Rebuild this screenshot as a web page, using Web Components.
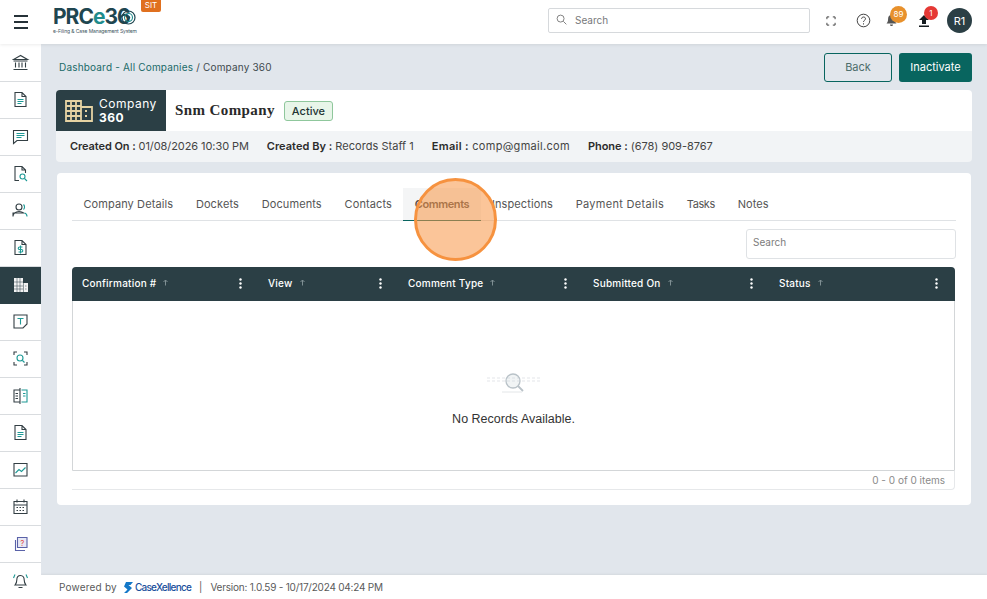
<!DOCTYPE html>
<html>
<head>
<meta charset="utf-8">
<title>Company 360</title>
<style>
  html, body { margin: 0; height: 100%; }
  body { font-family: "Inter", "Liberation Sans", sans-serif; color: #333; overflow: hidden; background: #e1e6ec; }
  .app { display: flex; flex-direction: column; height: 599px; }
  .row { display: flex; flex: 1; min-height: 0; }
  .col { display: flex; flex-direction: column; flex: 1; min-width: 0; }
</style>
</head>
<body>
<div class="app">
  <app-header></app-header>
  <div class="row">
    <side-nav></side-nav>
    <div class="col">
      <page-content>
        <page-head></page-head>
        <company-card></company-card>
        <detail-card>
          <tab-strip></tab-strip>
          <data-grid></data-grid>
        </detail-card>
      </page-content>
      <app-footer></app-footer>
    </div>
  </div>
</div>
<click-marker></click-marker>

<script>
const DARK = '#2b3f45';
const TEAL = '#08655f';

class AppHeader extends HTMLElement {
  constructor() {
    super();
    this.attachShadow({ mode: 'open' }).innerHTML = `
    <style>
      :host { display: flex; align-items: center; height: 44px; box-sizing: border-box; padding-bottom: 3px; background: #fff; position: relative; z-index: 2; box-shadow: 0 1px 3px rgba(0,0,0,.08); font-size: 10px; }
      .burger { width: 14px; height: 10px; margin: 3px 0 0 14px; border-top: 2px solid #263238; border-bottom: 2px solid #263238; position: relative; }
      .burger::after { content: ''; position: absolute; left: 0; right: 0; top: 4px; height: 2px; background: #263238; }
      .logo { margin-left: 25px; position: relative; width: 100px; height: 44px; align-self: flex-start; }
      .name { position: absolute; left: 0; top: 7px; font: 700 21px/20px "Inter", sans-serif; letter-spacing: -1px; color: #1f4650; white-space: nowrap; }
      .name b { color: #1f8c8c; font-weight: 700; }
      .tag { position: absolute; left: 0; top: 28px; font-size: 5px; line-height: 6px; letter-spacing: -.1px; color: #3c5560; white-space: nowrap; }
      .rings { position: absolute; left: 68px; top: 10px; }
      .sit { position: absolute; left: 88px; top: 0; width: 20px; height: 12px; background: #e0701f; color: #fff; font-size: 8px; line-height: 10px; text-align: center; border-radius: 0 0 2px 2px; }
      .search { margin-left: 395px; width: 262px; height: 25px; box-sizing: border-box; border: 1px solid #d6d9dc; border-radius: 2px; display: flex; align-items: center; gap: 8px; padding-left: 7px; color: #77797b; font-size: 10px; }
      .search span { padding-bottom: 2px; }
      .search svg { margin-bottom: 2px; }
      .tools { display: flex; align-items: center; margin-left: 16px; }
      .t { position: relative; display: flex; }
      .badge { position: absolute; border-radius: 50%; color: #fff; font-size: 8px; display: flex; align-items: center; justify-content: center; }
      .avatar { width: 25px; height: 25px; border-radius: 50%; background: ${DARK}; color: #fff; font-size: 11px; display: flex; align-items: center; justify-content: center; margin-left: 17px; }
    </style>
    <div class="burger"></div>
    <div class="logo">
      <span class="name">PRC<b>e</b>36</span>
      <svg class="rings" width="15" height="15" viewBox="0 0 15 15" fill="none" stroke="#1f4650"><circle cx="7.5" cy="7.5" r="6.5" stroke-width="1.2"/><circle cx="7.5" cy="7.5" r="4" stroke="#1f8c8c" stroke-width="1.1"/><circle cx="7.5" cy="7.5" r="1.7" fill="#1f4650" stroke="none"/></svg>
      <span class="tag">e-Filing &amp; Case Management System</span>
      <span class="sit">SIT</span>
    </div>
    <div class="search">
      <svg width="11" height="11" viewBox="0 0 12 12" fill="none" stroke="#777" stroke-width="1"><circle cx="5" cy="5" r="3.8"/><path d="M8 8l3.3 3.3"/></svg>
      <span>Search</span>
    </div>
    <div class="tools">
      <svg width="10" height="10" viewBox="0 0 11 11" fill="none" stroke="#333" stroke-width="1"><path d="M1 3.5V1h2.5M7.5 1H10v2.5M10 7.5V10H7.5M3.5 10H1V7.5"/></svg>
      <svg style="margin-left:20px" width="15" height="15" viewBox="0 0 15 15" fill="none" stroke="#444" stroke-width="1"><circle cx="7.5" cy="7.5" r="6.3"/><path d="M5.6 5.8c0-2.4 3.9-2.4 3.9 0 0 1.5-2 1.500-2 3.100M7.500 10.300v1.200"/></svg>
      <div class="t" style="margin-left:15px">
        <svg width="11" height="12" viewBox="0 0 11 12" fill="#555"><path d="M5.500 0c2.200 0 3.400 1.600 3.400 3.700 0 2.500.7 3.700 1.600 4.800H.5c.9-1.100 1.600-2.300 1.600-4.800C2.100 1.600 3.300 0 5.500 0zM4 9.500h3c0 2-3 2-3 0z"/></svg>
        <span class="badge" style="width:17px;height:17px;left:4px;top:-9px;background:#e8912c">89</span>
      </div>
      <div class="t" style="margin-left:21px">
        <svg width="12" height="13" viewBox="0 0 12 13" fill="#161c20"><path d="M6 1l5 5H8v4H4V6H1zM1 11.500h10V13H1z"/></svg>
        <span class="badge" style="width:14px;height:14px;left:6px;top:-8px;background:#e53935">1</span>
      </div>
      <div class="avatar">R1</div>
    </div>`;
  }
}

const NAV_ICONS = [
  `<path d="M8.500 1.500L1.500 5.500h14zM1.500 7h14M3.500 8.500v5M7 8.500v5M10 8.500v5M13.500 8.500v5M1.500 15.500h14"/>`,
  `<path d="M3 1.500h7l4 4v10H3zM10 1.500v4h4"/><path stroke="#1e9a96" d="M5.500 8.500h6M5.500 10.500h6M5.500 12.500h4"/>`,
  `<path d="M1.500 2.500h14v10H5l-3.500 3z"/><path stroke="#1e9a96" d="M4.500 5.500h8M4.500 7.500h8M4.500 9.500h5"/>`,
  `<path d="M7 15.500H3v-14h7l3.500 3.500v3M10 1.500V5h3.500"/><circle stroke="#1e9a96" cx="10.500" cy="11.500" r="2.500"/><path stroke="#1e9a96" d="M12.500 13.500l2.500 2.500"/>`,
  `<circle cx="7" cy="5" r="3"/><path d="M1 14.500c0-3 2.500-5 6-5 2 0 3.500.5 4.500 1.500H1z"/><path stroke="#1e9a96" d="M11.500 2.500a3.500 3.500 0 0 1 0 5M12.500 11c1.500.5 2.500 1.800 2.500 3.500"/>`,
  `<path d="M3 1.500h7l4 4v10H3zM10 1.500v4h4"/><path stroke="#1e9a96" d="M10.500 8h-3a1.200 1.200 0 0 0 0 2.500h2a1.200 1.200 0 0 1 0 2.500h-3M8.500 6.500v8"/>`,
  `<g fill="#f2f2f2" stroke="none"><path d="M2 2h9v14H2zM11.500 7H16v9h-4.500z"/></g><g stroke="#2b3f45" stroke-width=".5"><path d="M2 6h9M2 10h9M2 13h9M5 2v14M8 2v14"/><path d="M13 10h1.500M13 13h1.500"/></g>`,
  `<path d="M2 2h13v9l-4 4H2z"/><path stroke="#1e9a96" d="M5.500 5.500h6M8.500 5.500v6"/>`,
  `<path d="M5 2H2v3M12 2h3v3M15 12v3h-3M2 12v3h3"/><circle stroke="#1e9a96" cx="8" cy="8" r="3"/><path stroke="#1e9a96" d="M10.500 10.500l2 2"/>`,
  `<path d="M8 1v16M7.500 3H2v12h5.500"/><path stroke="#1e9a96" d="M9.500 3H15v12H9.500M11 6.500h2.500M11 9h2.500"/><path d="M3.500 6.500H6M3.500 9H6M3.500 11.500H6"/>`,
  `<path d="M3 1.500h7l4 4v10H3zM10 1.500v4h4"/><path stroke="#1e9a96" d="M5.500 8.500h6M5.500 10.500h6M5.500 12.500h4"/>`,
  `<path d="M2 2.500h13v12.500H2z"/><path stroke="#1e9a96" d="M3.500 12l3.500-3.500 2.500 2 4-4"/>`,
  `<path d="M2 3.500h13v12H2zM2 7h13M5 1.500v3M12 1.500v3"/><path stroke-dasharray="1.500 1.500" d="M4.500 9.500h8M4.500 12.500h8"/>`,
  `<path stroke="#5a62a8" d="M3.500 5v10.500H13"/><path stroke="#5a62a8" fill="#e8e9f5" d="M5.500 2.500h9.500v10H5.500z"/><text x="10.200" y="11" font-size="8" text-anchor="middle" fill="#e0524a" stroke="none" font-family="Inter">?</text>`,
  `<path d="M8.500 3.500c-2.500 0-3.700 2-3.700 4.500 0 3-1 4-1.800 5h11c-.8-1-1.800-2-1.800-5 0-2.500-1.200-4.500-3.700-4.500zM6.500 15.500h4"/><path stroke="#1e9a96" d="M3 2.500l-1.500 3.500M14 2.500l1.500 3.500"/>`
];

class SideNav extends HTMLElement {
  constructor() {
    super();
    const root = this.attachShadow({ mode: 'open' });
    root.innerHTML = `
    <style>
      :host { display: block; width: 41px; background: #fff; flex: none; position: relative; z-index: 1; padding-top: 1px; }
      .i { height: 36px; border-bottom: 1px solid #d9dcdf; display: flex; align-items: center; justify-content: center; }
      .i.on { background: ${DARK}; border-color: ${DARK}; }
      svg { width: 18px; height: 18px; fill: none; stroke: #333f44; stroke-width: 1.100; }
    </style>
    ${NAV_ICONS.map((p, n) => `<div class="i${n === 6 ? ' on' : ''}"><svg viewBox="0 0 18 18">${p}</svg></div>`).join('')}`;
  }
}

class PageContent extends HTMLElement {
  constructor() {
    super();
    this.attachShadow({ mode: 'open' }).innerHTML = `
    <style>
      :host { display: flex; flex-direction: column; flex: 1; min-height: 0; padding: 9px 15px 0 15px; }
    </style>
    <slot></slot>`;
  }
}

class PageHead extends HTMLElement {
  constructor() {
    super();
    this.attachShadow({ mode: 'open' }).innerHTML = `
    <style>
      :host { display: flex; align-items: center; height: 29px; padding-left: 3px; font-size: 10px; color: #3f4a4e; letter-spacing: .18px; }
      .crumb { flex: 1; white-space: nowrap; padding-bottom: 2px; }
      .crumb a { color: #1a6a68; }
      button { height: 29px; border-radius: 3px; font: 11px "Inter", sans-serif; box-sizing: border-box; padding: 0 0 2px; }
      .back { width: 68px; background: transparent; border: 1px solid ${TEAL}; color: #4d6d6b; margin-right: 7px; }
      .go { width: 73px; background: ${TEAL}; border: 0; color: #fff; }
    </style>
    <div class="crumb"><a>Dashboard - All Companies</a> / Company 360</div>
    <button class="back">Back</button><button class="go">Inactivate</button>`;
  }
}

class CompanyCard extends HTMLElement {
  constructor() {
    super();
    this.attachShadow({ mode: 'open' }).innerHTML = `
    <style>
      :host { display: block; margin-top: 8px; border-radius: 4px; overflow: hidden; font-size: 11px; }
      .top { display: flex; align-items: center; height: 41px; background: #fff; }
      .mark { width: 110px; height: 41px; background: ${DARK}; color: #fff; display: flex; align-items: center; gap: 6px; padding-left: 9px; box-sizing: border-box; font-size: 12px; line-height: 15px; }
      .mark span { letter-spacing: .5px; }
      .mark b { display: block; font-weight: 700; margin-top: -1px; }
      h1 { margin: 0 0 0 9px; font: 700 15px "Liberation Serif", serif; color: #2a2a2a; letter-spacing: .4px; }
      .pill { margin-left: 9px; height: 18px; padding: 0 7px; display: flex; align-items: center; border: 1px solid #8fc79c; background: #e8f5e9; border-radius: 3px; font-size: 11px; font-weight: 500; color: #233; }
      .info { height: 31px; box-sizing: border-box; padding: 0 0 2px 14px; background: #f2f4f6; display: flex; align-items: center; gap: 18px; font-size: 11px; color: #444; white-space: nowrap; }
      .info b { font-weight: 600; color: #2c2c2c; }
      .info .a { letter-spacing: -.08px; }
      .info .b { letter-spacing: .03px; }
      .info .c { letter-spacing: .3px; }
      .info .d { letter-spacing: -.03px; }
    </style>
    <div class="top">
      <div class="mark">
        <svg width="28" height="24" viewBox="0 0 28 24" fill="none" stroke="#e6d3a3" stroke-width="1.800"><path d="M1 2h15v20H1zM16 8h11v14H16zM1 7h15M1 12h15M1 17h15M6 2v20M11 2v20"/><path d="M20 12h2M20 17h2"/></svg>
        <span>Company<b>360</b></span>
      </div>
      <h1>Snm Company</h1>
      <span class="pill">Active</span>
    </div>
    <div class="info">
      <span class="a"><b>Created On :</b> 01/08/2026 10:30 PM</span>
      <span class="b"><b>Created By :</b> Records Staff 1</span>
      <span class="c"><b>Email :</b> comp@gmail.com</span>
      <span class="d"><b>Phone :</b> (678) 909-8767</span>
    </div>`;
  }
}

class DetailCard extends HTMLElement {
  constructor() {
    super();
    this.attachShadow({ mode: 'open' }).innerHTML = `
    <style>
      :host { display: block; margin: 11px 1px 0; height: 332px; box-sizing: border-box; padding: 15px 15px 0; background: #fff; border-radius: 4px; }
    </style>
    <slot></slot>`;
  }
}

class TabStrip extends HTMLElement {
  constructor() {
    super();
    const tabs = ['Company Details', 'Dockets', 'Documents', 'Contacts', 'Comments', 'Inspections', 'Payment Details', 'Tasks', 'Notes'];
    this.attachShadow({ mode: 'open' }).innerHTML = `
    <style>
      :host { display: flex; height: 32px; border-bottom: 1px solid #dfe2e5; font-size: 11px; color: #555; letter-spacing: .1px; }
      .t { padding: 0 11.4px; display: flex; align-items: center; white-space: nowrap; margin-bottom: -1px; border-bottom: 1px solid transparent; }
      .t.on { background: #f4f5f6; border-bottom-color: ${TEAL}; font-weight: 600; color: #4d4d4d; letter-spacing: -.4px; }
      .t.pay { letter-spacing: .3px; }
      .t.tasks { letter-spacing: -.4px; }
    </style>
    ${tabs.map(t => `<div class="t${t === 'Comments' ? ' on' : ''}${t === 'Payment Details' ? ' pay' : ''}${t === 'Tasks' ? ' tasks' : ''}">${t}</div>`).join('')}`;
  }
}

class DataGrid extends HTMLElement {
  constructor() {
    super();
    const cols = ['Confirmation #', 'View', 'Comment Type', 'Submitted On', 'Status'];
    const arrow = `<svg width="7" height="7" viewBox="0 0 7 7" fill="none" stroke="#7f8f93"><path d="M3.500 6.500V1M1.500 3l2-2 2 2"/></svg>`;
    const dots = `<svg class="dots" width="3" height="11" viewBox="0 0 3 11" fill="#fff"><circle cx="1.500" cy="1.500" r="1.200"/><circle cx="1.500" cy="5.500" r="1.200"/><circle cx="1.500" cy="9.500" r="1.200"/></svg>`;
    this.attachShadow({ mode: 'open' }).innerHTML = `
    <style>
      :host { display: block; font-size: 10px; }
      .bar { display: flex; justify-content: flex-end; padding: 8px 0; }
      .q { width: 210px; height: 30px; box-sizing: border-box; border: 1px solid #dfe2e5; border-radius: 3px; padding: 0 0 5px 6px; display: flex; align-items: center; color: #7c7c7c; }
      .grid { border: 1px solid #d3d6d8; border-bottom: 1px solid #d3d6d8; border-radius: 4px 4px 0 0; width: 883px; box-sizing: border-box; }
      .head { display: grid; grid-template-columns: 186px 140px 185px 186px 1fr; height: 34px; background: ${DARK}; color: #fff; margin: -1px -1px 0; border-radius: 4px 4px 0 0; }
      .h { display: flex; align-items: center; gap: 6px; padding: 0 16px 3px 10px; font-weight: 500; letter-spacing: .22px; position: relative; }
      .dots { position: absolute; right: 16px; top: 11px; }
      .h:last-child .dots { right: 17px; }
      .empty { height: 169px; display: flex; flex-direction: column; align-items: center; }
      .empty svg { margin-top: 71px; }
      .empty p { margin: 18px 0 0; font: 12.5px "Liberation Sans", sans-serif; color: #333; }
      .pager { width: 883px; box-sizing: border-box; height: 19px; border: 1px solid #e6e8ea; border-top: 0; border-left: 0; border-radius: 0 0 4px 0; text-align: right; line-height: 18px; padding-right: 9px; color: #8a8a8a; }
    </style>
    <div class="bar"><div class="q">Search</div></div>
    <div class="grid">
      <div class="head">${cols.map(c => `<div class="h">${c} ${arrow}${dots}</div>`).join('')}</div>
      <div class="empty">
        <svg width="54" height="22" viewBox="0 0 54 22" fill="none"><path d="M0 6h54M0 9h54" stroke="#f1f2f4" stroke-width="2" stroke-dasharray="3 2"/><circle cx="26" cy="9" r="7" stroke="#b9c2c8" stroke-width="1.300" fill="rgba(200,210,215,.25)"/><path d="M31 14l5 5" stroke="#b9c2c8" stroke-width="1.800"/><path d="M15 20h20" stroke="#e3e6e8"/></svg>
        <p>No Records Available.</p>
      </div>
    </div>
    <div class="pager">0 - 0 of 0 items</div>`;
  }
}

class AppFooter extends HTMLElement {
  constructor() {
    super();
    this.attachShadow({ mode: 'open' }).innerHTML = `
    <style>
      :host { display: flex; align-items: center; height: 24px; flex: none; background: #fff; padding-left: 18px; font-size: 10px; color: #5a5a5a; white-space: nowrap; box-shadow: 0 -1px 2px rgba(0,0,0,.06); }
      .pw { letter-spacing: .2px; }
      .brand { display: flex; align-items: center; margin-left: 7px; color: #1a4f9c; font-weight: 500; letter-spacing: -.75px; }
      .brand svg { margin-right: 2px; }
      .sep { margin: 0 8px; }
      .ver { letter-spacing: -.22px; }
    </style>
    <span class="pw">Powered by</span>
    <span class="brand"><svg width="9" height="11" viewBox="0 0 9 11" fill="#1478c8"><path d="M2 0h7L6.500 3H4.500L8 6 3 11H0l3.500-3.500L0 4.500z"/></svg>CaseXellence</span>
    <span class="sep">|</span>
    <span class="ver">Version: 1.0.59 - 10/17/2024 04:24 PM</span>`;
  }
}

class ClickMarker extends HTMLElement {
  constructor() {
    super();
    this.attachShadow({ mode: 'open' }).innerHTML = `
    <style>
      :host { display: block; position: absolute; left: 414px; top: 178px; width: 83px; height: 83px; box-sizing: border-box; border: 3px solid #f6923f; border-radius: 50%; background: rgba(248,150,70,.55); z-index: 5; }
    </style>`;
  }
}

customElements.define('app-header', AppHeader);
customElements.define('side-nav', SideNav);
customElements.define('page-content', PageContent);
customElements.define('page-head', PageHead);
customElements.define('company-card', CompanyCard);
customElements.define('detail-card', DetailCard);
customElements.define('tab-strip', TabStrip);
customElements.define('data-grid', DataGrid);
customElements.define('app-footer', AppFooter);
customElements.define('click-marker', ClickMarker);
</script>
</body>
</html>
